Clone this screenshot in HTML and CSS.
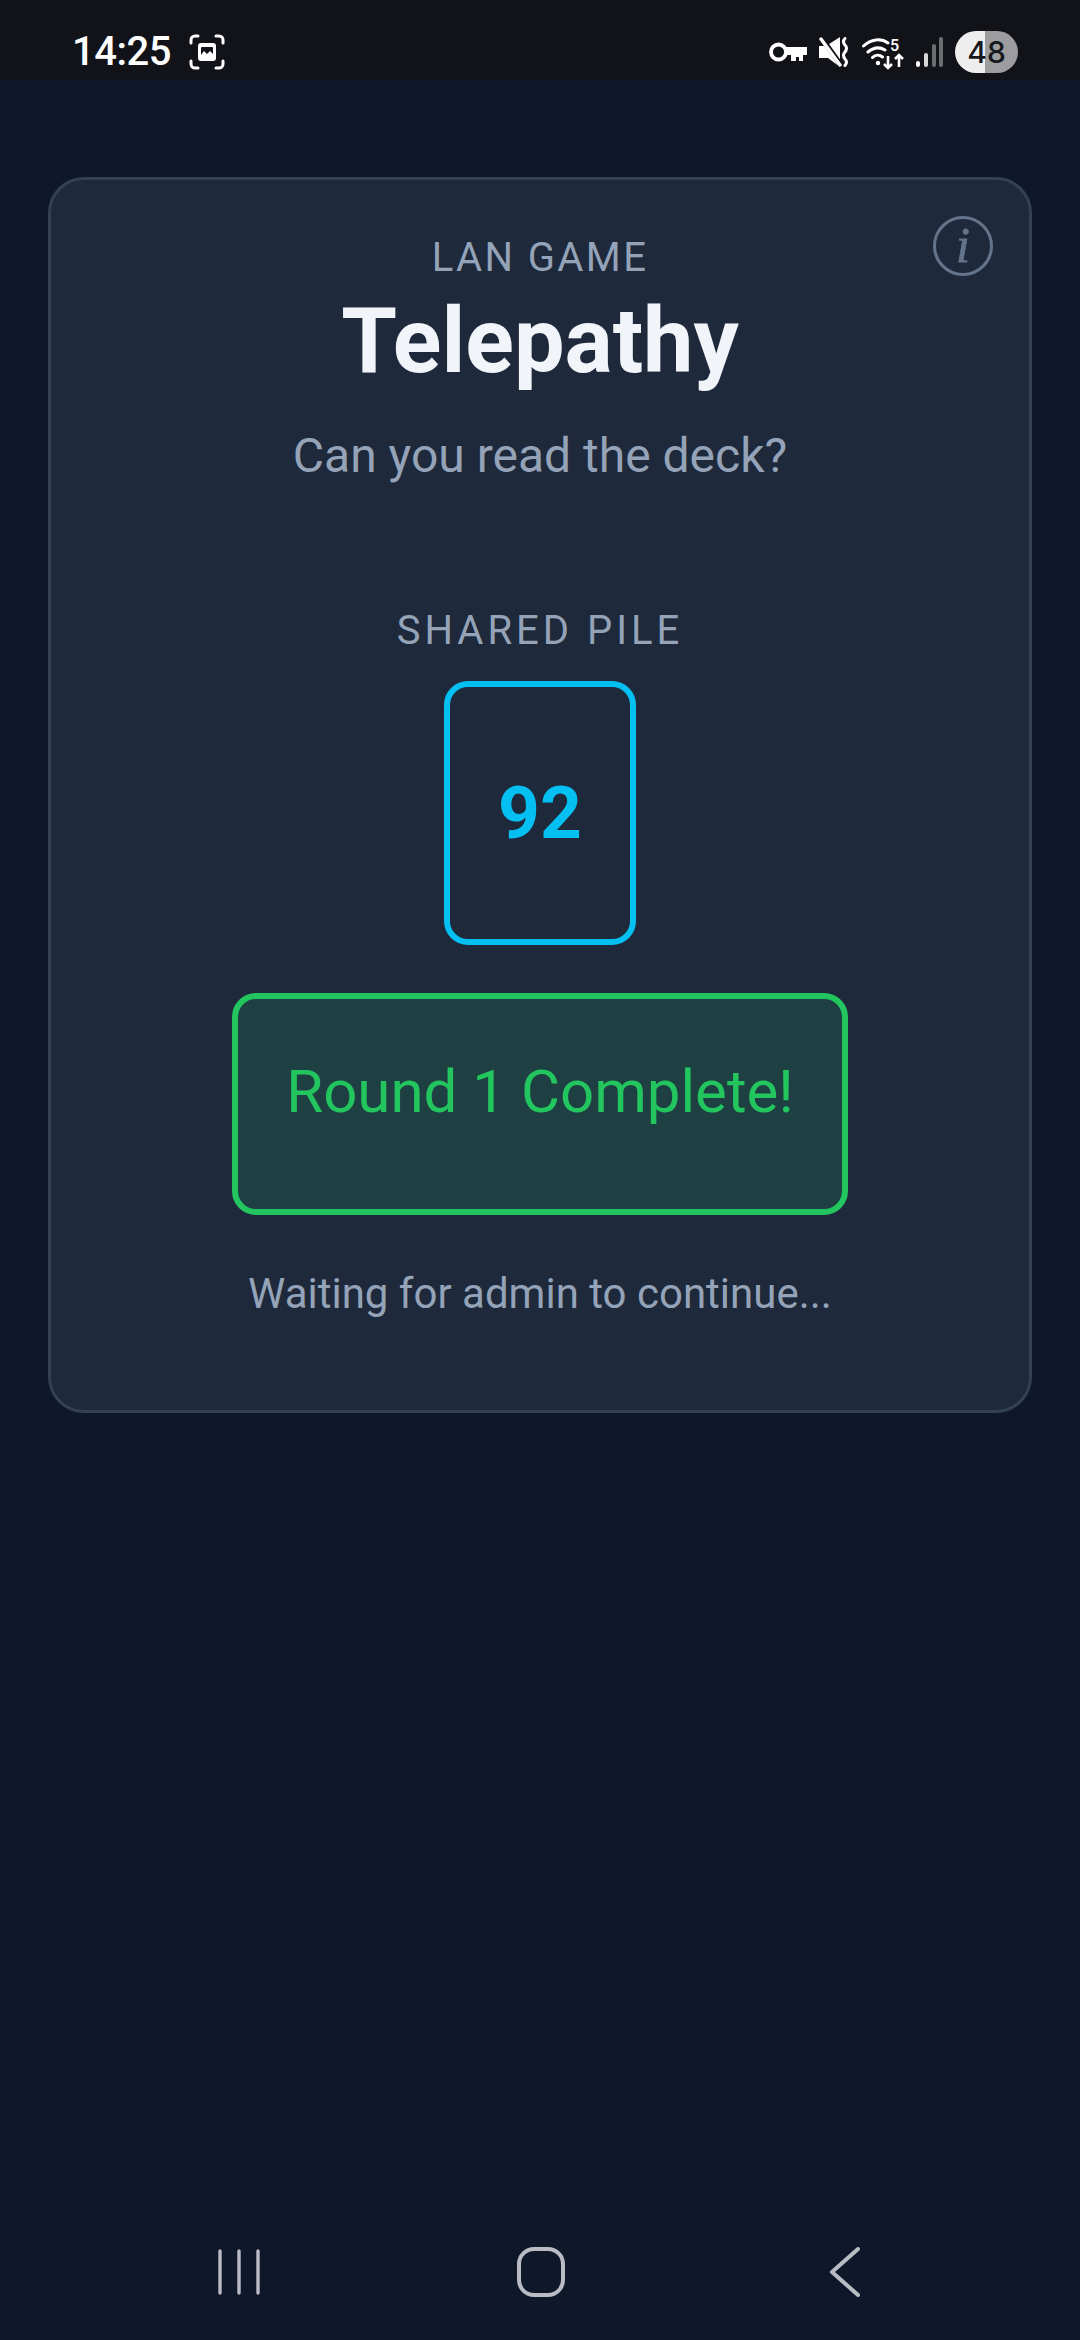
FILE: index.html
```html
<!DOCTYPE html>
<html lang="en">
<head>
<meta charset="utf-8">
<title>Telepathy</title>
<link rel="stylesheet" href="styles.css">
</head>
<body>
<header class="status-bar">
  <div class="status-left">
    <span class="clock">14:25</span>
    <svg class="shot-icon" width="36" height="36" viewBox="0 0 36 36" fill="none">
      <path d="M2 9V6a4 4 0 0 1 4-4h3M27 2h3a4 4 0 0 1 4 4v3M34 27v3a4 4 0 0 1-4 4h-3M9 34H6a4 4 0 0 1-4-4v-3" stroke="#fff" stroke-width="3" stroke-linecap="round"/>
      <path fill-rule="evenodd" d="M12 9h12a3 3 0 0 1 3 3v12a3 3 0 0 1-3 3H12a3 3 0 0 1-3-3V12a3 3 0 0 1 3-3zm0 5v7l3-4 3 3 3-3 3 3v-6a1 1 0 0 0-1-1H13a1 1 0 0 0-1 1z" fill="#fff"/>
    </svg>
  </div>
  <div class="status-right">
    <svg width="38" height="22" viewBox="0 0 38 22" fill="none">
      <circle cx="9.5" cy="11" r="7.5" stroke="#fff" stroke-width="3.8"/>
      <path d="M17 6h21v8h-4v6h-4v-4h-3v4h-5v-6h-5z" fill="#fff"/>
    </svg>
    <svg width="31" height="30" viewBox="0 0 31 30" fill="none">
      <path d="M0 9h7L21 0v30L9 21H0z" fill="#fff"/>
      <path d="M2 0l20 28" stroke="#111318" stroke-width="5"/>
      <path d="M2 2l19 26" stroke="#fff" stroke-width="3.4" stroke-linecap="round"/>
      <path d="M26 1.500q-3 3 0 6.500q3 3 0 7q-3 3 0 7q3 3 0 6.500" stroke="#fff" stroke-width="3" stroke-linecap="round"/>
    </svg>
    <svg class="wifi" width="42" height="36" viewBox="0 -4 42 36" fill="none">
      <path d="M1.500 8C9 1 19 0 26 5M6 14c6-5 12-5 17-2M10.500 19.500c3-3 7-3 10-.5" stroke="#fff" stroke-width="3" stroke-linecap="round"/>
      <circle cx="16" cy="25" r="2.200" fill="#fff"/>
      <path d="M26 18v12M22 26l4 4 4-4M37 29V17M33 21l4-4 4 4" stroke="#fff" stroke-width="2.6"/>
      <text class="wifi-num" x="28" y="12.500">5</text>
    </svg>
    <svg width="27" height="30" viewBox="0 0 27 30">
      <rect x="0" y="24" width="4" height="6" rx="2" fill="#fff"/>
      <rect x="8" y="16" width="4" height="14" rx="2" fill="#d8d8d8"/>
      <rect x="16" y="7" width="4" height="23" rx="2" fill="#6b6d70"/>
      <rect x="23" y="0" width="4" height="30" rx="2" fill="#6b6d70"/>
    </svg>
    <span class="battery">48</span>
  </div>
</header>

<main class="screen">
  <section class="panel">
    <span class="info"><i>i</i></span>
    <p class="eyebrow">LAN GAME</p>
    <h1 class="title">Telepathy</h1>
    <p class="tagline">Can you read the deck?</p>
    <p class="pile-label">SHARED PILE</p>
    <div class="pile-card">92</div>
    <div class="round-box">Round 1 Complete!</div>
    <p class="waiting">Waiting for admin to continue...</p>
  </section>
</main>

<nav class="nav-bar">
  <svg width="44" height="46" viewBox="0 0 44 46" fill="none">
    <path d="M3 2v42M22 2v42M41 2v42" stroke="#b9bcc2" stroke-width="3.4" stroke-linecap="round"/>
  </svg>
  <svg width="48" height="50" viewBox="0 0 48 50" fill="none">
    <rect x="2" y="2" width="44" height="46" rx="15" stroke="#b9bcc2" stroke-width="4"/>
  </svg>
  <svg class="nav-back" width="32" height="50" viewBox="0 0 32 50" fill="none">
    <path d="M29 2L3 25l26 23" stroke="#b9bcc2" stroke-width="4" stroke-linecap="round" stroke-linejoin="round"/>
  </svg>
</nav>
</body>
</html>
```

FILE: styles.css
```css
* { box-sizing: border-box; }
html, body { margin: 0; padding: 0; }
body {
  width: 1080px;
  height: 2340px;
  background: #0f172a;
  font-family: Roboto, "Liberation Sans", sans-serif;
  display: flex;
  flex-direction: column;
  overflow: hidden;
}
p, h1 { margin: 0; }

.status-bar {
  height: 80px;
  flex: none;
  background: #111318;
  display: flex;
  align-items: center;
  justify-content: space-between;
  padding: 24px 62px 0 72px;
  color: #fff;
}
.status-left { display: flex; align-items: center; gap: 18px; }
.clock { font-size: 40px; font-weight: 500; line-height: 1; letter-spacing: -0.5px; }
.status-right { display: flex; align-items: center; gap: 12px; }
.wifi-num { font: 500 16px Roboto, sans-serif; fill: #fff; }
.battery {
  width: 63px;
  height: 42px;
  border-radius: 21px;
  background: linear-gradient(90deg, #eeeeee 0 47.6%, #9d9d9f 47.6% 100%);
  color: #17181c;
  font-family: Inter, Roboto, sans-serif;
  font-size: 30px;
  font-weight: 500;
  letter-spacing: 0;
  line-height: 42px;
  text-align: center;
}

.screen { flex: 1; padding: 97px 48px 0; }
.panel {
  position: relative;
  height: 1236px;
  background: #1e293b;
  border: 3px solid #334155;
  border-radius: 36px;
  display: flex;
  flex-direction: column;
  align-items: center;
  padding-top: 55px;
}
.info {
  position: absolute;
  top: 36px;
  right: 36px;
  width: 60px;
  height: 60px;
  border: 3px solid #64748b;
  border-radius: 50%;
  color: #64748b;
  font-family: "Liberation Serif", serif;
  font-size: 50px;
  line-height: 52px;
  text-align: center;
  -webkit-text-stroke: 0.8px #64748b;
}
.eyebrow { font-size: 40px; line-height: 46px; color: #94a3b8; letter-spacing: 2.4px; }
.title { font-size: 90px; line-height: 122px; font-weight: 700; color: #f1f5f9; }
.tagline { font-size: 48px; line-height: 54px; color: #94a3b8; margin-top: 26px; }
.pile-label { font-size: 40px; line-height: 46px; color: #94a3b8; letter-spacing: 4px; margin-top: 125px; }
.pile-card {
  width: 192px;
  height: 264px;
  margin-top: 27px;
  border: 6px solid #04c0f2;
  border-radius: 24px;
  display: flex;
  align-items: center;
  justify-content: center;
  color: #04c0f2;
  font-size: 73px;
  font-weight: 700;
}
.round-box {
  width: 616px;
  height: 222px;
  margin-top: 48px;
  padding-top: 59px;
  border: 6px solid #22c55e;
  border-radius: 24px;
  background: #1e4042;
  color: #22c55e;
  font-size: 60px;
  line-height: 68px;
  text-align: center;
}
.waiting { font-size: 42px; line-height: 48px; color: #94a3b8; margin-top: 55px; }

.nav-bar {
  flex: none;
  height: 137px;
  padding-left: 217px;
  display: flex;
  align-items: center;
  gap: 256px;
}
.nav-back { margin-left: 8px; }
```
